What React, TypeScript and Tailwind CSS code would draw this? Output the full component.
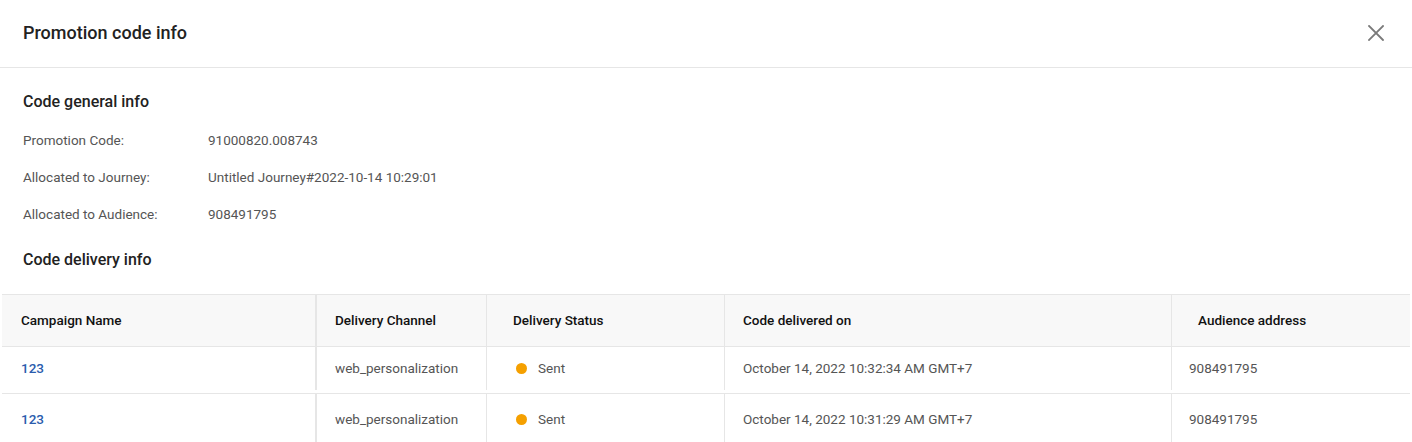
import React from "react";

const rows = [
  { name: "123", channel: "web_personalization", status: "Sent", date: "October 14, 2022 10:32:34 AM GMT+7", addr: "908491795", h: "h-[47px] pb-[3px]" },
  { name: "123", channel: "web_personalization", status: "Sent", date: "October 14, 2022 10:31:29 AM GMT+7", addr: "908491795", h: "h-[52px]" },
];

export default function App() {
  return (
    <div className="w-[1412px] h-[442px] bg-white overflow-hidden" style={{ fontFamily: "Roboto, 'Liberation Sans', sans-serif" }}>
      <div className="h-[68px] border-b border-[#e6e6e6] flex items-center justify-between pl-[23px] pr-[28px]">
        <div className="text-[18px] font-medium text-[#222] -mt-[2px]">Promotion code info</div>
        <svg width="16" height="16" viewBox="0 0 16 16" className="-mt-[1px]">
          <path d="M1 1 L15 15 M15 1 L1 15" stroke="#7a7a7a" strokeWidth="1.8" strokeLinecap="square" />
        </svg>
      </div>
      <div className="px-[23px]">
        <div className="mt-[24px] h-[20px] leading-[20px] text-[16px] font-medium text-[#222]">Code general info</div>
        <div className="mt-[10px] flex flex-col text-[13.5px] text-[#555]">
          {[
            ["Promotion Code:", "91000820.008743"],
            ["Allocated to Journey:", "Untitled Journey#2022-10-14 10:29:01"],
            ["Allocated to Audience:", "908491795"],
          ].map(([l, v]) => (
            <div key={l} className="h-[37px] flex items-center">
              <div className="w-[185px]">{l}</div>
              <div>{v}</div>
            </div>
          ))}
        </div>
        <div className="mt-[17px] h-[20px] leading-[20px] text-[16px] font-medium text-[#222]">Code delivery info</div>
      </div>
      <div className="mt-[24px] mx-[2px] border-t border-[#e6e6e6]">
        <div className="flex h-[52px] bg-[#f8f8f8] border-b border-[#e6e6e6] text-[13.5px] font-medium text-[#111]">
          <div className="w-[313px] pl-[19px] flex items-center">Campaign Name</div>
          <div className="w-[171px] border-l-2 border-[#e6e6e6] pl-[18px] flex items-center">Delivery Channel</div>
          <div className="w-[238px] border-l border-[#e6e6e6] pl-[26px] flex items-center">Delivery Status</div>
          <div className="w-[447px] border-l border-[#e6e6e6] pl-[18px] flex items-center">Code delivered on</div>
          <div className="flex-1 border-l border-[#e6e6e6] pl-[26px] flex items-center">Audience address</div>
        </div>
        {rows.map((r, i) => (
          <div key={i} className={`flex ${r.h} border-b border-[#e6e6e6] text-[13.5px] text-[#555]`}>
            <div className="w-[313px] pl-[19px] flex items-center font-medium text-[#2a5cad]">{r.name}</div>
            <div className="w-[171px] border-l-2 border-[#e6e6e6] pl-[18px] flex items-center">{r.channel}</div>
            <div className="w-[238px] border-l border-[#e6e6e6] pl-[29px] flex items-center gap-[11px]">
              <span className="w-[11px] h-[11px] rounded-full bg-[#f5a000]" />
              <span>{r.status}</span>
            </div>
            <div className="w-[447px] border-l border-[#e6e6e6] pl-[18px] flex items-center">{r.date}</div>
            <div className="flex-1 border-l border-[#e6e6e6] pl-[17px] flex items-center">{r.addr}</div>
          </div>
        ))}
      </div>
    </div>
  );
}
